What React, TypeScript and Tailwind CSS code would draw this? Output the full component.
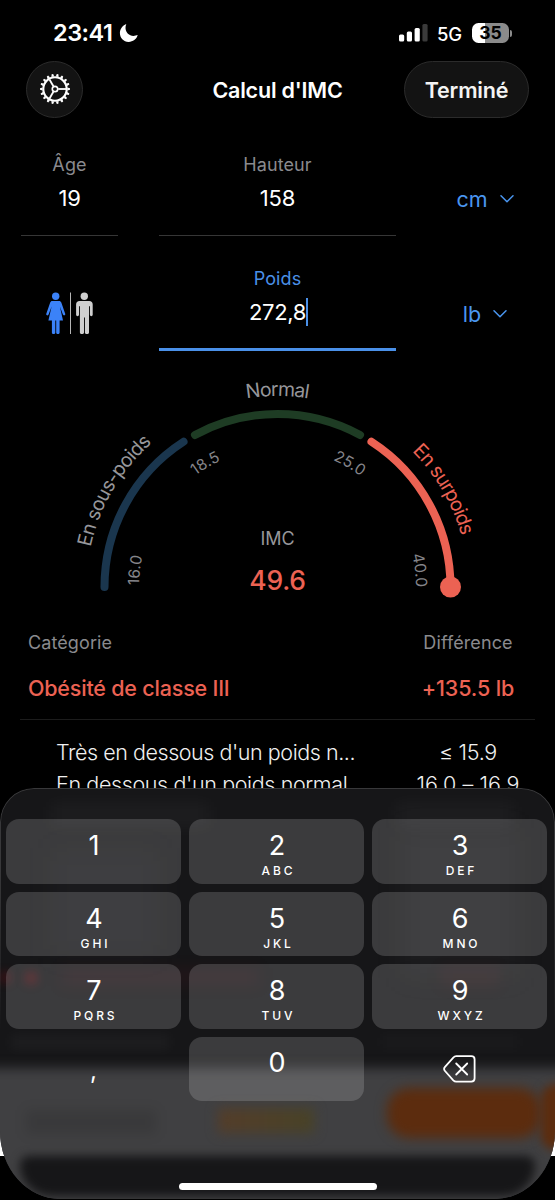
import { ReactNode } from "react";

const CX = 277.5;
const CY = 587;

const keys = [
  { digit: "1", letters: "" },
  { digit: "2", letters: "ABC" },
  { digit: "3", letters: "DEF" },
  { digit: "4", letters: "GHI" },
  { digit: "5", letters: "JKL" },
  { digit: "6", letters: "MNO" },
  { digit: "7", letters: "PQRS" },
  { digit: "8", letters: "TUV" },
  { digit: "9", letters: "WXYZ" },
];

// angle in degrees, 0 = left end of the gauge, 180 = right end
const point = (r: number, deg: number) => {
  const a = (deg * Math.PI) / 180;
  return `${(CX - r * Math.cos(a)).toFixed(2)} ${(CY - r * Math.sin(a)).toFixed(2)}`;
};

const arc = (r: number, from: number, to: number) =>
  `M${point(r, from)} A${r} ${r} 0 0 1 ${point(r, to)}`;

const StatusBar = () => (
  <div className="flex h-[66px] items-center pl-[53px] pr-[43px]">
    <span className="text-[23.5px] font-semibold leading-none tracking-[-0.5px]">23:41</span>
    <svg className="ml-[7px]" width="20" height="20" viewBox="0 0 20 20">
      <path d="M7.3 0.9C6.7 2.3 6.4 3.8 6.5 5.3c0.3 4.3 3.6 7.6 7.9 7.6 1.6 0 3-0.3 4.3-0.8-1.2 4.3-4.8 6.8-9.1 6.8C4.5 18.9 0.9 15.1 0.9 10.1C0.9 6 3.4 2.4 7.3 0.9Z" fill="#fff" />
    </svg>
    <div className="ml-auto flex items-center">
      <svg width="29" height="18" viewBox="0 0 29 18">
        <rect x="0" y="10.5" width="5.2" height="7" rx="1.5" fill="#fff" />
        <rect x="7.8" y="7.5" width="5.2" height="10" rx="1.5" fill="#fff" />
        <rect x="15.6" y="4" width="5.2" height="13.5" rx="1.5" fill="#fff" />
        <rect x="23.4" y="0" width="5.2" height="17.5" rx="1.5" fill="#3a3a3a" />
      </svg>
      <span className="ml-[9px] mt-[2px] w-[26px] text-[18.5px] font-medium leading-none tracking-[-0.3px]">5G</span>
      <div className="ml-[9px] flex h-[20px] w-[37px] items-center justify-center rounded-[6.5px] bg-linear-to-r from-white from-36% to-[#8b8b8b] to-36%">
        <span className="text-[17.5px] font-bold leading-none text-black">35</span>
      </div>
      <div className="ml-px h-[7px] w-[2px] rounded-r-full bg-[#8b8b8b]" />
    </div>
  </div>
);

const GearIcon = () => (
  <svg width="32" height="32" viewBox="-16 -16 32 32" fill="none" stroke="#fff">
    <circle r="11.7" strokeWidth="2.1" />
    {Array.from({ length: 18 }, (_, i) => (
      <path key={i} d="M12.4 -1.4L15 -0.8V0.8L12.4 1.4Z" fill="#fff" stroke="none" transform={`rotate(${i * 20})`} />
    ))}
    <circle r="2.7" strokeWidth="1.7" />
    {[0, 120, 240].map((a) => (
      <path key={a} d="M3.2 0H11" strokeWidth="1.8" transform={`rotate(${a})`} />
    ))}
  </svg>
);

const Header = () => (
  <header className="-mt-px flex h-[48px] items-center justify-between px-[26px]">
    <button className="flex size-[57px] items-center justify-center rounded-full border border-[#2b2b2b] bg-[#131313]">
      <GearIcon />
    </button>
    <h1 className="ml-[68px] mt-[3px] text-[21.5px] font-semibold leading-none tracking-[-0.2px]">Calcul d'IMC</h1>
    <button className="h-[57px] w-[125px] rounded-full border border-[#2b2b2b] bg-[#131313] pt-[3px] text-[21.5px] font-semibold leading-none tracking-[-0.2px] text-[#f4f4f4]">
      Terminé
    </button>
  </header>
);

const Unit = ({ name }: { name: string }) => (
  <button className="flex items-center justify-center gap-[12px] text-[21.5px] leading-[24px] text-[#4a96f0]">
    {name}
    <svg width="14" height="8" viewBox="0 0 14 8" fill="none" stroke="#4a96f0" strokeWidth="1.5" strokeLinecap="round" strokeLinejoin="round">
      <path d="M1 0.8L7 6.8L13 0.8" />
    </svg>
  </button>
);

const Label = ({ children }: { children: ReactNode }) => (
  <p className="text-[18px] leading-[20px] tracking-[0.1px]">{children}</p>
);

const Genders = () => (
  <svg width="48" height="44" viewBox="0 0 48 44">
    <g fill="#3b82f8">
      <circle cx="9.7" cy="4.3" r="3.7" />
      <path d="M6.3 8.9H13.1C14.2 8.9 14.9 9.4 15.3 10.5L19.2 21.8C19.7 23.4 17.5 24 16.9 22.6L13.9 14.5L17 28.4H13.6V40.8C13.6 42.5 10.2 42.5 10.2 40.8V28.4H9.3V40.8C9.3 42.5 5.9 42.5 5.9 40.8V28.4H2.4L5.6 14.5L2.6 22.6C2 24 -0.2 23.4 0.3 21.8L4.2 10.5C4.6 9.4 5.2 8.9 6.3 8.9Z" />
    </g>
    <path d="M24.5 0.5V42" stroke="#b5b5b5" strokeWidth="1" />
    <g fill="#cfcfcf">
      <circle cx="38.3" cy="4.3" r="3.7" />
      <path d="M33.5 8.9H43.2C45.4 8.9 46.7 10.3 46.7 12.5V22.8C46.7 24.7 43.9 24.7 43.9 22.8V14.3H43V40.5C43 42.5 38.9 42.5 38.9 40.5V25.5H38V40.5C38 42.5 33.9 42.5 33.9 40.5V14.3H33V22.8C33 24.7 30.1 24.7 30.1 22.8V12.5C30.1 10.3 31.4 8.9 33.5 8.9Z" />
    </g>
  </svg>
);

const Form = () => (
  <section className="mt-[41px] h-[206px]">
    <div className="flex">
      <div className="ml-[21px] h-[81px] w-[97px] border-b border-[#363636] text-center text-[#8a8a8e]">
        <Label>Âge</Label>
        <p className="mt-[11px] text-[22px] leading-[24px] tracking-[-0.2px] text-white">19</p>
      </div>
      <div className="ml-[41px] h-[81px] w-[237px] border-b border-[#363636] text-center text-[#8a8a8e]">
        <Label>Hauteur</Label>
        <p className="mt-[11px] text-[22px] leading-[24px] tracking-[-0.2px] text-white">158</p>
      </div>
      <div className="flex flex-1 items-start justify-center pl-[19px] pt-[32px]">
        <Unit name="cm" />
      </div>
    </div>
    <div className="mt-[33px] flex">
      <div className="ml-[46px] w-[72px] pt-[23px]">
        <Genders />
      </div>
      <div className="ml-[41px] h-[82px] w-[237px] border-b-[3px] border-[#4a90e8] text-center text-[#4a90e8]">
        <Label>Poids</Label>
        <p className="mt-[9px] flex items-center justify-center text-[22px] leading-[28px] tracking-[-0.3px] text-white">
          272,8
          <span className="-mr-[2px] h-[28px] w-[2px] bg-[#4a90e8]" />
        </p>
      </div>
      <div className="flex flex-1 items-start justify-center pl-[19px] pt-[33px]">
        <Unit name="lb" />
      </div>
    </div>
  </section>
);

const ranges = [
  { id: "under", label: "En sous-poids", from: 0, to: 57.1, mid: 30.5, length: 123, color: "#1a364e", text: "#96969a" },
  { id: "normal", label: "Normal", from: 61.5, to: 118.5, mid: 90, length: 62, color: "#1e3c24", text: "#96969a" },
  { id: "over", label: "En surpoids", from: 122.9, to: 180, mid: 149.6, length: 99, color: "#ec6253", text: "#ec6253" },
];

const ticks = [
  { value: "16.0", at: 6.8 },
  { value: "18.5", at: 59.7 },
  { value: "25.0", at: 120.3 },
  { value: "40.0", at: 173.2 },
];

const Gauge = () => (
  <svg className="block" width="555" height="250" viewBox="0 361 555 250" fill="none">
    <defs>
      {ranges.map((r) => (
        <path key={r.id} id={r.id} d={arc(191, r.mid - 30, r.mid + 30)} />
      ))}
      {ticks.map((t) => (
        <path key={t.value} id={`tick-${t.value}`} d={arc(138.5, t.at - 20, t.at + 20)} />
      ))}
    </defs>
    {ranges.map((r) => (
      <g key={r.id}>
        <path d={arc(173, r.from, r.to)} stroke={r.color} strokeWidth="8" strokeLinecap="round" />
        <text fill={r.text} fontSize="19.5" textAnchor="middle" textLength={r.length}>
          <textPath href={`#${r.id}`} startOffset="50%" textLength={r.length}>{r.label}</textPath>
        </text>
      </g>
    ))}
    {ticks.map((t) => (
      <text key={t.value} fill="#85858a" fontSize="15.5" textAnchor="middle">
        <textPath href={`#tick-${t.value}`} startOffset="50%">{t.value}</textPath>
      </text>
    ))}
    <circle cx={CX + 173} cy={CY} r="10.5" fill="#ec6253" />
    <text x={CX} y="544.5" fill="#96969a" fontSize="18" textAnchor="middle">IMC</text>
    <text x={CX} y="590" fill="#ec6253" fontSize="26.5" fontWeight="500" textAnchor="middle" letterSpacing="-0.2">49.6</text>
  </svg>
);

const Result = () => (
  <section className="mx-[20px] flex h-[109px] justify-between border-b border-[#1c1c1c] pl-[8px] pt-[22px]">
    <div>
      <p className="text-[18px] leading-[20px] tracking-[0.1px] text-[#8a8a8e]">Catégorie</p>
      <p className="mt-[23px] text-[21.5px] font-medium leading-[24px] tracking-[-0.2px] text-[#ec6253]">Obésité de classe III</p>
    </div>
    <div className="w-[134px] text-center">
      <p className="text-[18px] leading-[20px] tracking-[0.1px] text-[#8a8a8e]">Différence</p>
      <p className="mt-[23px] text-[21.5px] font-medium leading-[24px] tracking-[-0.1px] text-[#ec6253]">+135.5 lb</p>
    </div>
  </section>
);

const Categories = () => (
  <section className="flex flex-col pt-[16px] text-[21.5px] font-light text-[#f0f0f0]">
    <div className="flex h-[32px] items-center pl-[56px] pr-[20px]">
      <span className="tracking-[-0.45px]">Très en dessous d'un poids n...</span>
      <span className="ml-auto w-[134px] text-center tracking-[-0.3px]">≤ 15.9</span>
    </div>
    <div className="flex h-[33px] items-center pl-[56px] pr-[20px]">
      <span className="tracking-[-0.38px]">En dessous d'un poids normal</span>
      <span className="ml-auto w-[134px] text-center tracking-[0.1px]">16.0 – 16.9</span>
    </div>
  </section>
);

const Glass = () => (
  <div className="absolute inset-0 overflow-hidden rounded-t-[34px] rounded-b-[60px_68px] bg-[#161618]">
    <div className="absolute left-[50px] top-[14px] h-[26px] w-[160px] bg-white/3 blur-[8px]" />
    <div className="absolute left-[395px] top-[14px] h-[26px] w-[120px] bg-white/3 blur-[8px]" />
    <div className="absolute left-[50px] top-[60px] h-[110px] w-[110px] bg-[#aab]/3 blur-[14px]" />
    <div className="absolute left-[400px] top-[40px] h-[150px] w-[120px] bg-[#aab]/4 blur-[14px]" />
    <div className="absolute left-0 top-[184px] size-[11px] bg-red-600/18 blur-[5px]" />
    <div className="absolute left-[25px] top-[184px] size-[12px] bg-red-600/22 blur-[5px]" />
    <div className="absolute left-[60px] top-[180px] h-[18px] w-[200px] bg-red-600/5 blur-[8px]" />
    <div className="absolute left-[440px] top-[180px] h-[18px] w-[60px] bg-red-600/5 blur-[8px]" />
    <div className="absolute left-[10px] top-[246px] h-[16px] w-[160px] bg-white/3 blur-[6px]" />
    <div className="absolute left-[380px] top-[246px] h-[16px] w-[140px] bg-white/2 blur-[6px]" />
    <div className="absolute -inset-x-[20px] top-[280px] h-[150px] bg-[#404042] blur-[6px]" />
    <div className="absolute left-[26px] top-[322px] h-[24px] w-[130px] bg-black/10 blur-[6px]" />
    <div className="absolute left-[218px] top-[320px] h-[25px] w-[96px] bg-linear-to-r from-[#533d2a] to-[#484227] blur-[6px]" />
    <div className="absolute left-[387px] top-[300px] h-[50px] w-[154px] rounded-[22px] bg-[#5c2c0e] blur-[6px]" />
    <div className="absolute left-[541px] top-[296px] h-[66px] w-[30px] rounded-[20px] bg-[#5c2c0e] blur-[5px]" />
    <div className="absolute inset-x-[20px] top-[368px] h-[40px] rounded-t-[10px] rounded-b-[36px] bg-[#161618] blur-[5px]" />
  </div>
);

const Keyboard = () => (
  <div className="absolute inset-x-0 top-[788px] h-[411px]">
    <Glass />
    <div className="absolute inset-0 rounded-t-[34px] rounded-b-[60px_68px] border border-white/15 mask-b-from-20% mask-b-to-60%" />
    <div className="relative grid auto-rows-[64.6px] grid-cols-3 gap-[8px] pl-[6px] pr-[8px] pt-[31px]">
      {keys.map((key) => (
        <button key={key.digit} className="flex flex-col items-center rounded-[13px] bg-white/16 pt-[12px]">
          <span className="pl-px text-[27px] leading-[30px]">{key.digit}</span>
          <span className="mt-[3px] pl-[4px] text-[12px] font-medium leading-[14px] tracking-[2.9px]">{key.letters}</span>
        </button>
      ))}
      <button className="pt-[3px] text-[24px] leading-[30px]">,</button>
      <button className="flex flex-col items-center rounded-[13px] bg-white/16 pt-[11px]">
        <span className="pl-px text-[27px] leading-[30px]">0</span>
      </button>
      <button className="flex items-center justify-center">
        <svg width="33" height="28" viewBox="0 0 33 28" fill="none" stroke="#fff" strokeWidth="1.8" strokeLinecap="round" strokeLinejoin="round">
          <path d="M13.2 1.2H28.3C30.6 1.2 31.6 2.2 31.6 4.5V23.3C31.6 25.6 30.6 26.6 28.3 26.6H13.2C12 26.6 11.2 26.2 10.3 25.3L2 16C0.7 14.5 0.7 13.3 2 11.8L10.3 2.6C11.2 1.6 12 1.2 13.2 1.2Z" />
          <path d="M13.2 8.5L24.2 19.5M24.2 8.5L13.2 19.5" />
        </svg>
      </button>
    </div>
    <div className="absolute bottom-[9px] left-[178.5px] h-[7px] w-[198.5px] rounded-full bg-white" />
  </div>
);

export default function App() {
  return (
    <main className="relative h-[1200px] w-[555px] overflow-hidden bg-black font-['Inter',sans-serif] text-white">
      <StatusBar />
      <Header />
      <div className="h-px" />
      <Form />
      <Gauge />
      <Result />
      <Categories />
      <div className="absolute inset-x-0 top-[1100px] h-[56px] bg-white" />
      <Keyboard />
    </main>
  );
}
